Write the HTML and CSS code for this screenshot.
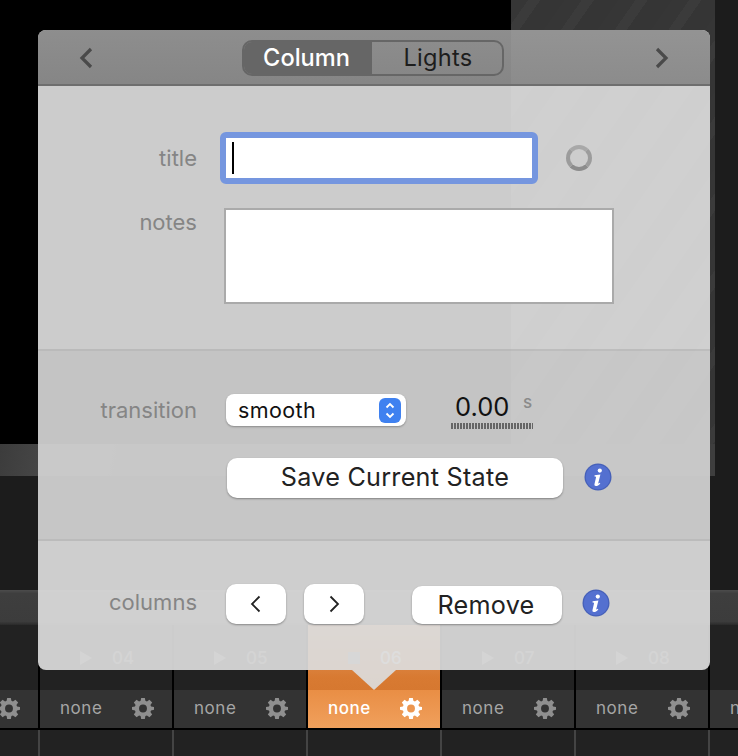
FILE: index.html
```html
<!DOCTYPE html>
<html lang="en">
<head>
<meta charset="utf-8">
<title>Column</title>
<link rel="stylesheet" href="styles.css">
</head>
<body>
<svg class="defs" width="0" height="0" aria-hidden="true">
  <symbol id="gear" viewBox="0 0 24 24">
    <path fill-rule="evenodd" d="M10 1h4l.6 3.2 1.7.7L19 3l3 3-1.900 2.700.7 1.700L24 11v3l-3.200.6-.7 1.700L22 19l-3 3-2.700-1.900-1.700.7L14 24h-4l-.6-3.200-1.700-.7L5 22l-3-3 1.900-2.700-.7-1.700L0 14v-3l3.200-.6.7-1.700L2 6l3-3 2.700 1.900 1.700-.7zM12 8.200a4.300 4.300 0 1 0 0 8.600 4.300 4.300 0 0 0 0-8.600z"/>
  </symbol>
  <symbol id="info" viewBox="0 0 28 28">
    <circle cx="14" cy="14" r="13.500" fill="#4660b8"/>
    <circle cx="14" cy="14" r="12.200" fill="#5470d0"/>
    <circle cx="15.800" cy="7.600" r="2.100" fill="#fff"/>
    <path fill="#fff" d="M10.600 12.200l5.800-.7-2.100 8.600c-.1.6.4.7 1.600-.3l.4.6c-1.600 1.900-3 2.600-4.400 2.600-1.200 0-1.700-.7-1.400-1.900l1.500-6.700c.1-.7-.2-.9-1.500-1z"/>
  </symbol>
</svg>

<div class="stage">
  <div class="upper">
    <div class="main">
      <div class="viewer"><div class="stripes"></div></div>
      <div class="band"></div>
      <div class="well"></div>
    </div>
    <div class="side"></div>
  </div>
  <div class="ruler"></div>
  <div class="cells">
    <div class="cell"><div class="cell-head"></div><div class="cell-foot"><svg class="gear"><use href="#gear"/></svg></div><div class="cell-rest"></div></div>
    <div class="cell"><div class="cell-head"><span class="play"></span><span class="num">04</span></div><div class="cell-foot"><span class="name">none</span><svg class="gear"><use href="#gear"/></svg></div><div class="cell-rest"></div></div>
    <div class="cell"><div class="cell-head"><span class="play"></span><span class="num">05</span></div><div class="cell-foot"><span class="name">none</span><svg class="gear"><use href="#gear"/></svg></div><div class="cell-rest"></div></div>
    <div class="cell active"><div class="cell-head"><span class="stop"></span><span class="num">06</span></div><div class="cell-foot"><span class="name">none</span><svg class="gear"><use href="#gear"/></svg></div><div class="cell-rest"></div></div>
    <div class="cell"><div class="cell-head"><span class="play"></span><span class="num">07</span></div><div class="cell-foot"><span class="name">none</span><svg class="gear"><use href="#gear"/></svg></div><div class="cell-rest"></div></div>
    <div class="cell"><div class="cell-head"><span class="play"></span><span class="num">08</span></div><div class="cell-foot"><span class="name">none</span><svg class="gear"><use href="#gear"/></svg></div><div class="cell-rest"></div></div>
    <div class="cell"><div class="cell-head"></div><div class="cell-foot"><span class="name">none</span><svg class="gear"><use href="#gear"/></svg></div><div class="cell-rest"></div></div>
  </div>
</div>

<div class="popover">
  <header class="pop-head">
    <svg class="nav" viewBox="0 0 16 24"><path d="M13 3L4 12l9 9"/></svg>
    <div class="segments">
      <span class="seg seg-on">Column</span>
      <span class="seg">Lights</span>
    </div>
    <svg class="nav" viewBox="0 0 16 24"><path d="M3 3l9 9-9 9"/></svg>
  </header>

  <section class="sec sec-info">
    <div class="row row-title">
      <span class="label">title</span>
      <div class="input-ring"><span class="caret"></span></div>
      <span class="radio"></span>
    </div>
    <div class="row row-notes">
      <span class="label">notes</span>
      <div class="textarea"></div>
    </div>
  </section>

  <section class="sec sec-trans">
    <div class="row row-trans">
      <span class="label">transition</span>
      <div class="select">
        <span>smooth</span>
        <span class="stepper"><svg viewBox="0 0 22 25"><path d="M7.500 9.500L11 6l3.500 3.500M7.500 15.500L11 19l3.500-3.500"/></svg></span>
      </div>
      <div class="duration"><span class="dur-val">0.00</span><span class="ticks"></span></div>
      <span class="unit">s</span>
    </div>
    <div class="row row-save">
      <button class="btn btn-save">Save Current State</button>
      <svg class="info"><use href="#info"/></svg>
    </div>
  </section>

  <section class="sec sec-cols">
    <div class="row row-cols">
      <span class="label">columns</span>
      <button class="btn btn-arrow"><svg viewBox="0 0 16 22"><path d="M11.500 3.500L4 11l7.500 7.500"/></svg></button>
      <button class="btn btn-arrow"><svg viewBox="0 0 16 22"><path d="M4.500 3.500L12 11l-7.500 7.500"/></svg></button>
      <button class="btn btn-remove">Remove</button>
      <svg class="info"><use href="#info"/></svg>
    </div>
  </section>
</div>
<div class="pointer"></div>
</body>
</html>
```

FILE: styles.css
```css
* { box-sizing: border-box; }
html, body { margin: 0; padding: 0; }
body {
  width: 738px; height: 756px; overflow: hidden; position: relative;
  background: #000;
  font-family: Inter, "Liberation Sans", sans-serif;
}
.defs { position: absolute; }

/* background application */
.stage { width: 738px; height: 756px; overflow: hidden; }
.upper { display: flex; height: 590px; }
.main { width: 715px; }
.side { width: 23px; background: #1c1c1c; }
.viewer { height: 444px; background: #000; display: flex; justify-content: flex-end; }
.stripes {
  width: 204px; height: 100%;
  background: repeating-linear-gradient(125deg, #363636 0 14px, #3b3b3b 14px 24px, #353535 24px 44px);
}
.band { height: 32px; background: linear-gradient(100deg, #3c3c3c, #4c4c4c 10%, #3e3e3e 20%); }
.well { height: 114px; background: #1c1c1c; }
.ruler { height: 35px; background: linear-gradient(#4c4c4c, #3e3e3e 10%, #3c3c3c 90%, #2a2a2a); }
.cells { display: flex; margin-left: -96px; width: 1000px; }
.cell { width: 134px; flex: none; }
.cell-head {
  height: 65px; background: #222; border-left: 2px solid #000;
  display: flex; align-items: center; gap: 20px; padding: 0 0 0 40px;
  color: #777; font-size: 17px; font-weight: 500;
}
.play { width: 0; height: 0; border-left: 12px solid #777; border-top: 7px solid transparent; border-bottom: 7px solid transparent; }
.stop { width: 12px; height: 12px; background: #999; }
.cell-foot {
  height: 40px; border-left: 2px solid #000; border-bottom: 2px solid #000;
  background: #333; display: flex; align-items: center; justify-content: space-between;
  padding: 0 18px 2px 20px; color: #a6a6a6; font-size: 17px; letter-spacing: .55px;
}
.gear { width: 22px; height: 22px; fill: #8f8f8f; margin-left: auto; }
.cell-rest { height: 26px; background: #222; border-left: 2px solid #444; }
.active .cell-head { background: linear-gradient(#e6a06a, #d87a32 80%, #d67830); color: #eee; }
.active .cell-foot { background: linear-gradient(#e98e45, #f0a05c); color: #fff; font-weight: 500; }
.active .gear { fill: #fff; }

/* popover */
.popover {
  position: absolute; left: 38px; top: 30px; width: 672px; height: 640px;
  border-radius: 8px; overflow: hidden;
  background: rgba(219, 219, 219, .93);
  display: flex; flex-direction: column;
}
.pointer {
  position: absolute; left: 352px; top: 670px; width: 44px; height: 20px;
  background: rgba(219, 219, 219, .93);
  clip-path: polygon(0 0, 100% 0, 50% 100%);
}
.pop-head {
  height: 56px; flex: none; padding: 0 40px;
  background:
    linear-gradient(rgba(255, 255, 255, .03), rgba(0, 0, 0, .03)),
    linear-gradient(90deg, #8a8a8a 70.400%, #909090 70.400%);
  border-bottom: 2px solid #6e6e6e;
  display: flex; align-items: center; justify-content: space-between;
}
.nav { width: 16px; height: 24px; margin-top: 2px; fill: none; stroke: #4a4a4a; stroke-width: 3.200; }
.segments {
  display: flex; height: 36px; width: 262px; margin: 2px 0 0 -3px;
  border: 2px solid #666; border-radius: 10px; overflow: hidden;
  font-size: 23.600px;
}
.seg { flex: 1; display: flex; align-items: center; justify-content: center; color: #1d1d1d; padding: 0 0 1px 3px; letter-spacing: .25px; }
.seg-on { flex: none; width: 128px; padding: 0 2px 1px 0; background: #666; color: #fff; font-weight: 500; letter-spacing: 0; }

.sec { flex: none; }
.row { display: flex; }
.label { width: 159px; text-align: right; font-size: 22px; color: #858585; flex: none; }

.sec-info { height: 263px; padding-top: 46px; }
.row-title { align-items: center; height: 52px; }
.row-title .label { margin-right: 23px; }
.input-ring { width: 318px; height: 52px; border: 6px solid #7596df; border-radius: 6px; background: #fff; padding: 4px 0 0 6px; }
.caret { display: block; width: 2px; height: 32px; background: #000; }
.radio { width: 26px; height: 26px; margin-left: 28px; border: 4px solid #9c9c9c; border-bottom-color: #8c8c8c; border-top-color: #a8a8a8; border-radius: 50%; background: #cdcdcd; }
.row-notes { margin-top: 24px; }
.row-notes .label { margin-right: 27px; margin-top: 1px; }
.textarea { width: 390px; height: 96px; background: #fff; border: 2px solid #aaa; }

.sec-trans {
  height: 192px; padding-top: 43px;
  background: rgba(0, 0, 0, .035);
  border-top: 2px solid rgba(0, 0, 0, .05);
  border-bottom: 2px solid rgba(0, 0, 0, .05);
}
.row-trans { height: 32px; align-items: center; }
.row-trans .label { margin-right: 29px; }
.select {
  width: 180px; height: 32px; border-radius: 8px; background: #fff;
  box-shadow: 0 1px 2px rgba(0, 0, 0, .3);
  display: flex; align-items: center; justify-content: space-between;
  padding: 0 5px 0 12px; font-size: 21.500px; color: #111; letter-spacing: .4px;
}
.stepper { width: 22px; height: 25px; border-radius: 6px; background: #3f81f0; display: block; }
.stepper svg { display: block; width: 22px; height: 25px; fill: none; stroke: #fff; stroke-width: 1.800; }
.duration { margin: 2px 0 0 45px; width: 82px; display: flex; flex-direction: column; padding-left: 4px; }
.dur-val { font-size: 25.500px; color: #111; line-height: 28px; height: 28px; }
.ticks {
  width: 82px; height: 6px; margin: 2px 0 0 -4px;
  background: repeating-linear-gradient(90deg, #666 0 2px, transparent 2px 3px);
}
.unit { margin: -16px 0 0 -10px; font-size: 17px; font-weight: 500; color: #8a8a8a; width: 12px; }

.btn {
  border: 0; background: #fff; border-radius: 10px; padding: 0; margin: 0;
  font-family: inherit; color: #222; display: flex; align-items: center; justify-content: center;
  box-shadow: 0 1px 2px rgba(0, 0, 0, .35);
}
.row-save { margin-top: 32px; margin-left: 189px; align-items: center; }
.btn-save { width: 336px; height: 40px; padding-bottom: 3px; font-size: 25.200px; letter-spacing: .25px; }
.info { width: 28px; height: 28px; margin: -2px 0 0 20px; }
.btn-save + .info { margin-left: 21px; }

.sec-cols { height: 127px; padding-top: 43px; }
.row-cols { align-items: center; height: 40px; }
.row-cols .label { margin-right: 29px; margin-top: -5px; }
.btn-arrow { width: 60px; height: 40px; margin-right: 18px; }
.btn-arrow svg { width: 16px; height: 22px; fill: none; stroke: #222; stroke-width: 1.800; }
.btn-remove { width: 150px; height: 38px; margin: 2px 0 0 30px; padding-right: 2px; font-size: 25.200px; letter-spacing: .25px; }
```
